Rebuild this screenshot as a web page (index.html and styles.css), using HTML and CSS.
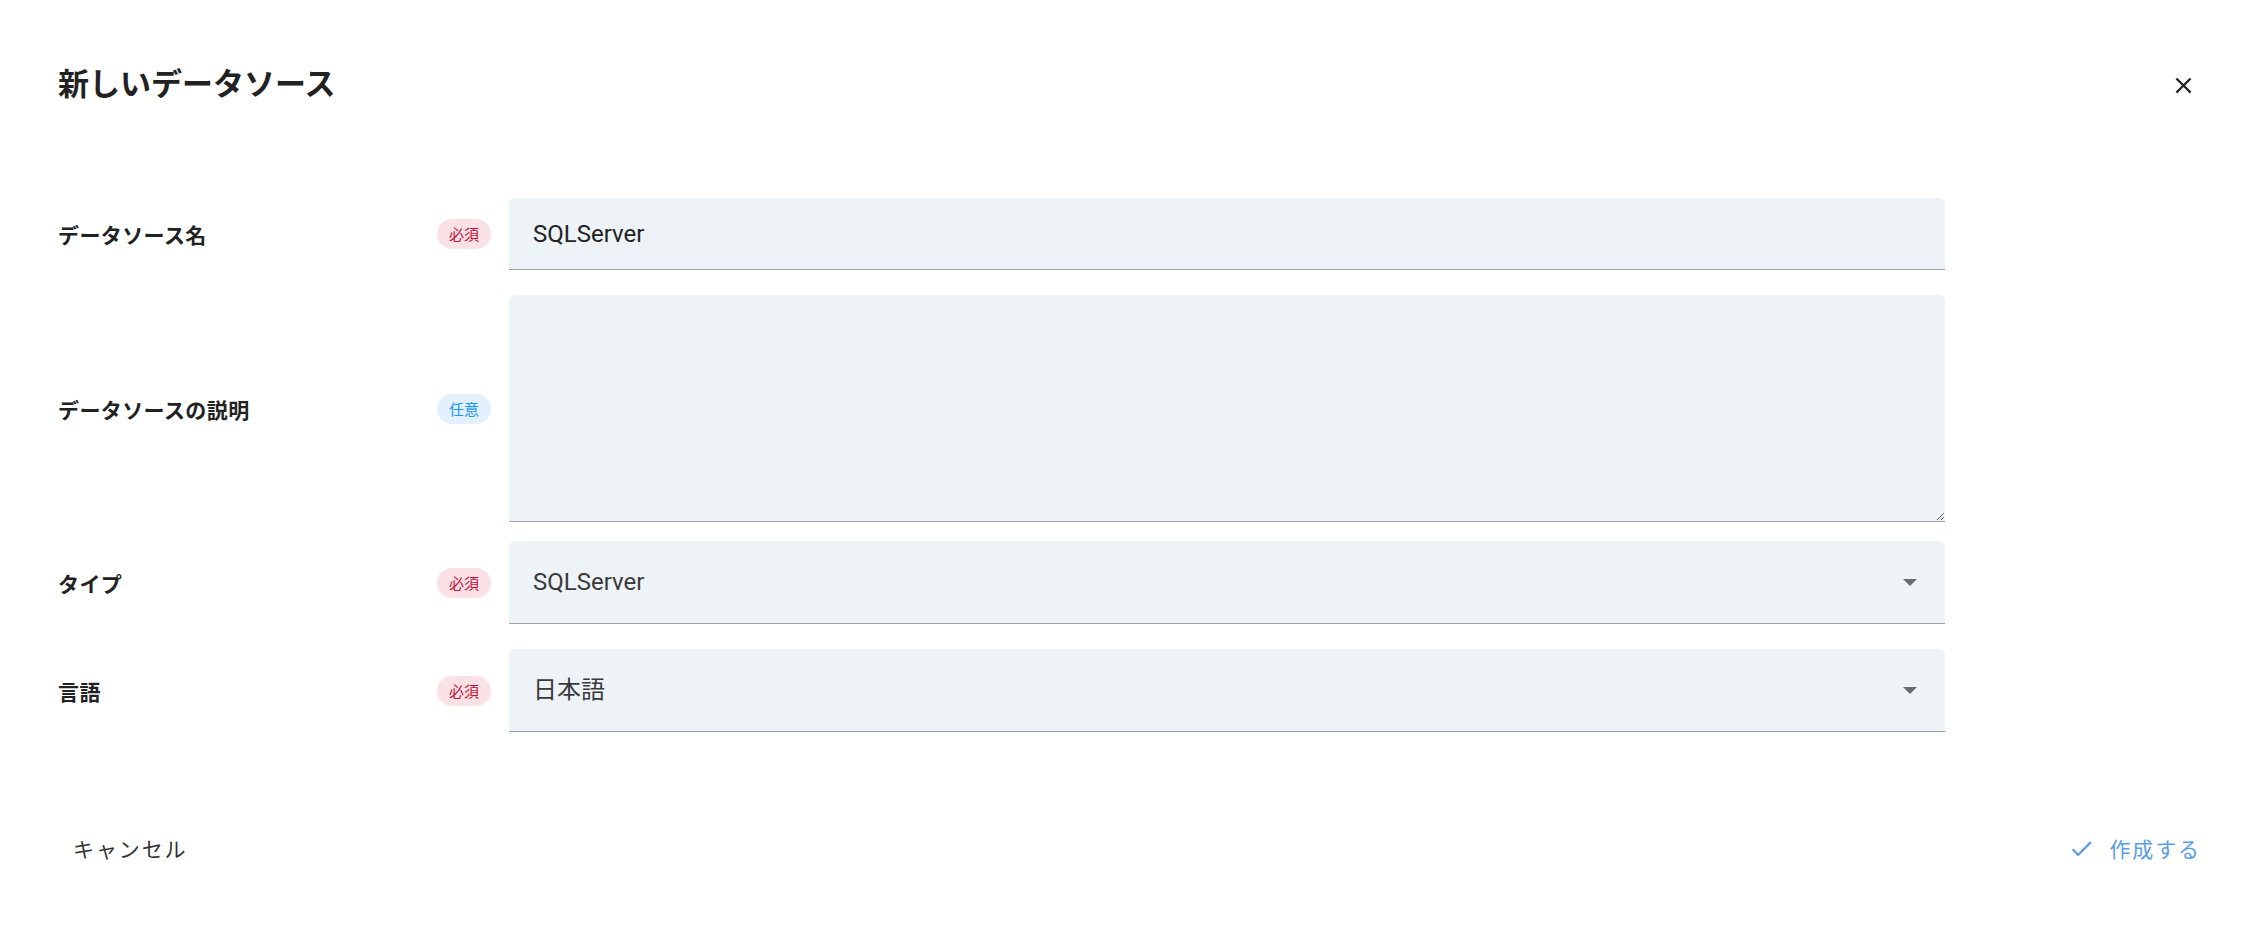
FILE: index.html
```html
<!DOCTYPE html>
<html lang="ja">
<head>
  <meta charset="UTF-8">
  <title>新しいデータソース</title>
  <link rel="stylesheet" href="styles.css">
</head>
<body>
  <div class="dialog">
    <div class="dialog-header">
      <h2 class="dialog-title">新しいデータソース</h2>
      <button class="icon-btn" aria-label="閉じる">
        <svg viewBox="0 0 24 24" width="27" height="27"><path d="M19 6.41L17.59 5 12 10.59 6.41 5 5 6.41 10.59 12 5 17.59 6.41 19 12 13.41 17.59 19 19 17.59 13.41 12z"/></svg>
      </button>
    </div>

    <form class="form">
      <div class="form-row row-name">
        <label class="form-label" for="dsName">データソース名</label>
        <span class="badge required">必須</span>
        <input class="field" type="text" id="dsName" value="SQLServer">
      </div>

      <div class="form-row row-desc">
        <label class="form-label" for="dsDesc">データソースの説明</label>
        <span class="badge optional">任意</span>
        <textarea class="field area" id="dsDesc"></textarea>
      </div>

      <div class="form-row row-type">
        <label class="form-label" for="dsType">タイプ</label>
        <span class="badge required">必須</span>
        <div class="select-wrap">
          <select class="field select" id="dsType">
            <option>SQLServer</option>
            <option>MySQL</option>
            <option>PostgreSQL</option>
          </select>
        </div>
      </div>

      <div class="form-row row-lang">
        <label class="form-label" for="dsLang">言語</label>
        <span class="badge required">必須</span>
        <div class="select-wrap">
          <select class="field select" id="dsLang">
            <option>日本語</option>
            <option>English</option>
          </select>
        </div>
      </div>
    </form>

    <div class="dialog-actions">
      <button class="text-btn cancel">キャンセル</button>
      <button class="text-btn primary">
        <svg viewBox="0 0 24 24" width="27" height="27"><path d="M9 16.17L4.83 12l-1.42 1.41L9 19 21 7l-1.41-1.41z"/></svg>
        作成する
      </button>
    </div>
  </div>
</body>
</html>
```

FILE: styles.css
```css
/* Base */
body {
  margin: 0;
  background: #ffffff;
  color: #222222;
  font-family: Roboto, "Noto Sans CJK JP", sans-serif;
}

.dialog {
  padding: 58px 63px 0 58px;
}

/* Header */
.dialog-header {
  display: flex;
  align-items: center;
  justify-content: space-between;
  height: 48px;
}

.dialog-title {
  margin: 0;
  font-size: 31px;
  font-weight: 700;
  line-height: 48px;
  color: #222;
  font-family: "Noto Sans CJK JP", sans-serif;
}

.icon-btn {
  width: 40px;
  height: 40px;
  padding: 0;
  border: none;
  background: none;
  display: flex;
  align-items: center;
  justify-content: center;
  cursor: pointer;
  margin-top: 6px;
}

.icon-btn svg {
  fill: #222;
}

/* Form */
.form {
  margin-top: 92px;
}

.form-row {
  display: grid;
  grid-template-columns: 361px 54px 1436px;
  column-gap: 18px;
  align-items: center;
}

.row-name { margin-bottom: 25px; }
.row-desc { margin-bottom: 19px; }
.row-type { margin-bottom: 25px; }

.form-label {
  font-family: "Noto Sans CJK JP", sans-serif;
  font-size: 21px;
  font-weight: 700;
  letter-spacing: 0.4px;
  color: #222;
}

.badge {
  display: block;
  width: 54px;
  height: 30px;
  line-height: 30px;
  border-radius: 15px;
  text-align: center;
  font-size: 15px;
  font-family: "Noto Sans CJK JP", sans-serif;
}

.badge.required {
  background: #f9e1e5;
  color: #c2123a;
}

.badge.optional {
  background: #e2f1fd;
  color: #2196f3;
}

.field {
  box-sizing: border-box;
  width: 100%;
  margin: 0;
  border: none;
  border-bottom: 1px solid #9ea1a5;
  border-radius: 6px 6px 0 0;
  background: #eef3f8;
  font-family: Roboto, "Noto Sans CJK JP", sans-serif;
  font-size: 24px;
  color: #222;
  padding: 0 24px;
  outline: none;
}

input.field {
  height: 72px;
}

.area {
  height: 227px;
  display: block;
  resize: vertical;
  padding-top: 16px;
}

.select-wrap {
  position: relative;
}

.select {
  appearance: none;
  -webkit-appearance: none;
  height: 83px;
  color: #3a3a3a;
  cursor: pointer;
}

.select-wrap::after {
  content: '';
  position: absolute;
  right: 28px;
  top: 38px;
  border-left: 7.5px solid transparent;
  border-right: 7.5px solid transparent;
  border-top: 7.5px solid #6b6b6b;
  pointer-events: none;
}

/* Actions */
.dialog-actions {
  display: flex;
  justify-content: space-between;
  margin: 89px -10px 0 3px;
}

.text-btn {
  height: 54px;
  padding: 0 12px;
  border: none;
  background: none;
  display: flex;
  align-items: center;
  font-family: "Noto Sans CJK JP", sans-serif;
  font-size: 21px;
  letter-spacing: 1.9px;
  cursor: pointer;
}

.text-btn.cancel {
  color: #333;
}

.text-btn.primary {
  color: #5b9de8;
}

.text-btn.primary svg {
  fill: #5b9de8;
  margin-right: 14px;
}
```
